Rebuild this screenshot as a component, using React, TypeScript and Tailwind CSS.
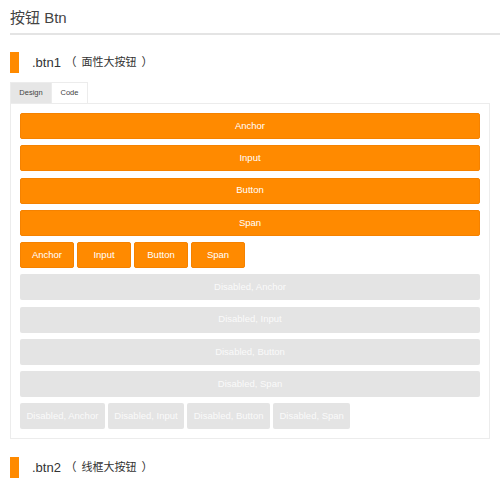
import React from "react";

const full = ["Anchor", "Input", "Button", "Span"];

function Heading({ name, cn }: { name: string; cn: string }) {
  return (
    <div className="flex items-center h-[21px]">
      <div className="w-[9px] h-[21px] bg-[#ff8a00]" />
      <span className="ml-[13px] text-[13px] leading-[21px] text-[#333]">{name}</span>
      <span className="text-[11.5px] leading-[21px] text-[#333] ml-[4px] mr-[5px]">（</span>
      <span className="text-[11px] leading-[21px] text-[#333]">{cn}</span>
      <span className="text-[11.5px] leading-[21px] text-[#333] ml-[5px]">）</span>
    </div>
  );
}

export default function App() {
  return (
    <div className="w-[500px] h-[500px] overflow-hidden bg-white pl-[10px] font-['Liberation_Sans','Noto_Sans_CJK_SC',sans-serif] text-[#333]">
      <h1 className="pt-[8px] pb-[5px] text-[15px] leading-[20px] text-[#444] border-b-2 border-[#e4e4e4]">
        按钮 Btn
      </h1>

      <div className="mt-[17px]">
        <Heading name=".btn1" cn="面性大按钮" />
      </div>

      <div className="mt-[9px] mr-[10px]">
        <div className="flex h-[21px]">
          <div className="w-[42px] flex items-center justify-center bg-[#e6e6e6] border border-b-0 border-[#ececec] text-[7.5px] text-[#444]">
            Design
          </div>
          <div className="w-[36px] flex items-center justify-center bg-white border border-l-0 border-b-0 border-[#ececec] text-[7.5px] text-[#444]">
            Code
          </div>
        </div>
        <div className="border border-[#ececec] px-[9px] pt-[9px] pb-[9px] flex flex-col gap-[6.25px]">
          {full.map((t) => (
            <div
              key={t}
              className="h-[26px] rounded-[2px] bg-[#ff8a00] border border-[#f58200] flex items-center justify-center text-[9.5px] text-white"
            >
              {t}
            </div>
          ))}
          <div className="flex gap-[3px]">
            {full.map((t) => (
              <div
                key={t}
                className="h-[26px] w-[54px] rounded-[2px] bg-[#ff8a00] border border-[#f58200] flex items-center justify-center text-[9.5px] text-white"
              >
                {t}
              </div>
            ))}
          </div>
          {full.map((t) => (
            <div
              key={"d" + t}
              className="h-[26px] rounded-[2px] bg-[#e4e4e4] flex items-center justify-center text-[9.5px] text-[#fafafa]"
            >
              Disabled, {t}
            </div>
          ))}
          <div className="flex gap-[3px]">
            {full.map((t) => (
              <div
                key={"ds" + t}
                className="h-[26px] px-[6.5px] rounded-[2px] bg-[#e4e4e4] flex items-center justify-center text-[9.5px] text-[#fafafa]"
              >
                Disabled, {t}
              </div>
            ))}
          </div>
        </div>
      </div>

      <div className="mt-[18px]">
        <Heading name=".btn2" cn="线框大按钮" />
      </div>
    </div>
  );
}
